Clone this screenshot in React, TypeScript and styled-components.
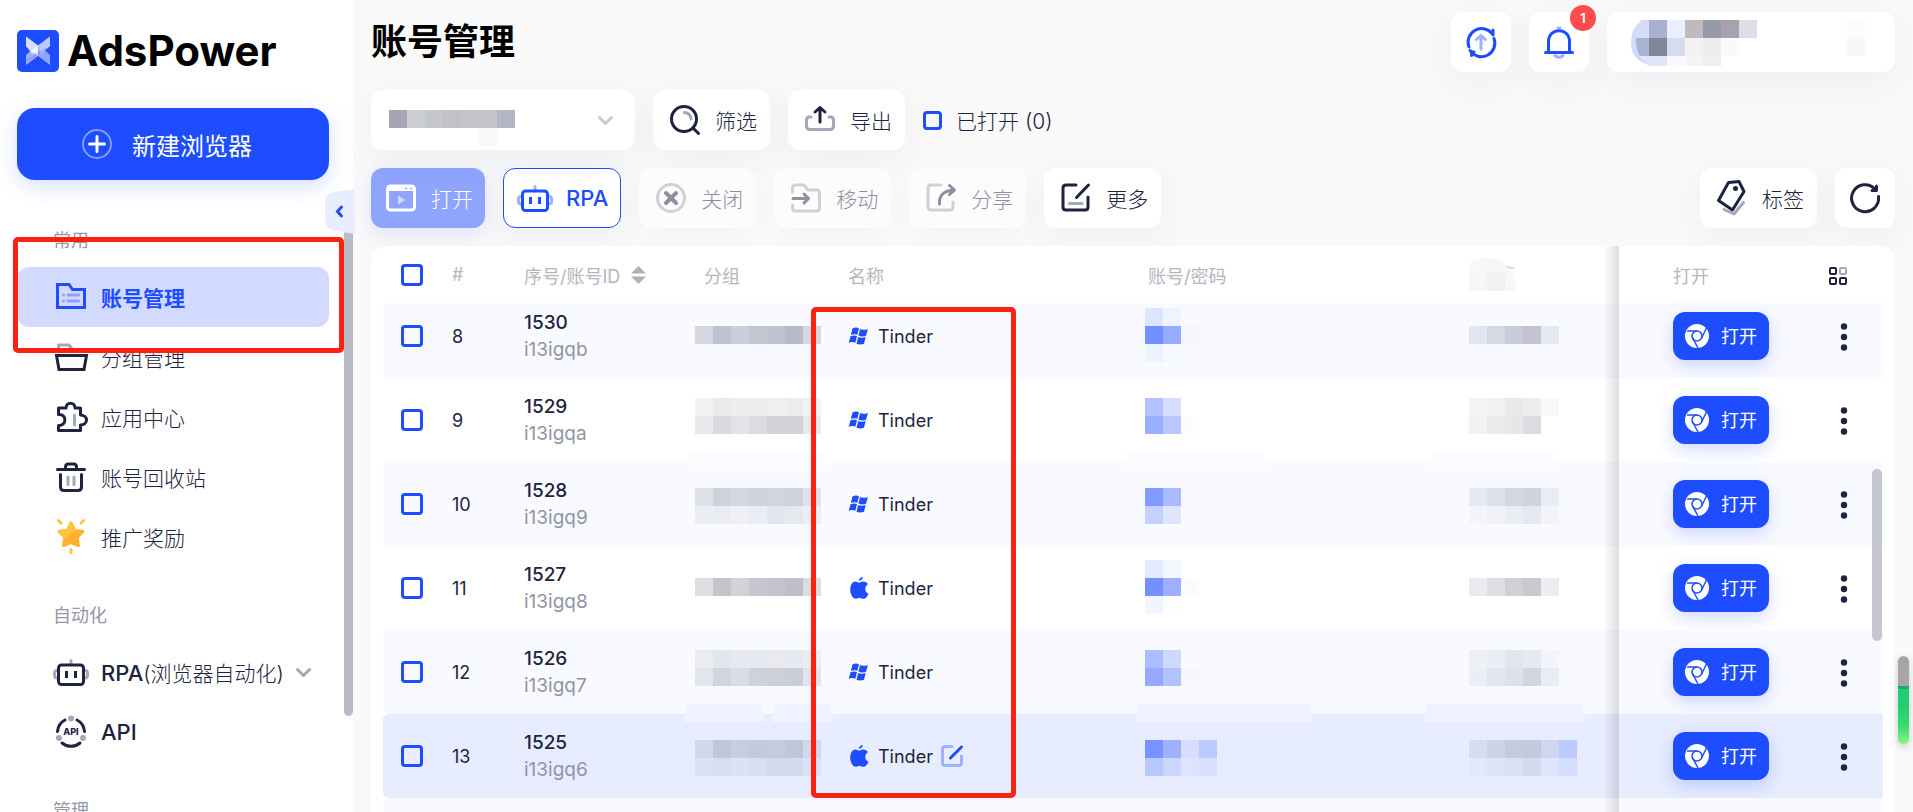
import React from 'react';
import styled, { createGlobalStyle, css } from 'styled-components';

const blue = '#1e4dff';
const blueSoft = '#9fb2ff';
const ink = '#1e2340';
const inkSoft = '#a5a8b8';

const GlobalStyle = createGlobalStyle`
  *, *::before, *::after { box-sizing: border-box; }
  body {
    margin: 0;
    background: #f9f9f9;
    color: ${ink};
    font-family: Inter, 'Noto Sans CJK SC', sans-serif;
    font-size: 18px;
    font-weight: 400;
  }
  button, input, select { font: inherit; color: inherit; margin: 0; }
  button { cursor: pointer; }
  svg { display: block; flex: none; overflow: visible; }
`;

/* ---------- page frame ---------- */

const Shell = styled.div`
  display: flex;
  height: 100vh;
  overflow: hidden;
  position: relative;
`;

const Sidebar = styled.aside`
  position: relative;
  flex: 0 0 353px;
  display: flex;
  flex-direction: column;
  padding: 30px 24px 0 17px;
  background: #fff;
`;

const Main = styled.main`
  flex: 1;
  min-width: 0;
  display: flex;
  flex-direction: column;
  gap: 18px;
  padding: 12px 18px 0;
`;

/* ---------- sidebar ---------- */

const Brand = styled.div`
  display: flex;
  align-items: center;
  gap: 8px;
  height: 42px;
  color: #000;
  font-size: 42px;
  font-weight: 700;
  line-height: 42px;
`;

const CreateButton = styled.button`
  display: flex;
  flex: none;
  align-items: center;
  justify-content: center;
  gap: 20px;
  height: 72px;
  margin-top: 36px;
  padding: 0 12px 0 0;
  border: 0;
  border-radius: 18px;
  background: ${blue};
  box-shadow: 0 6px 20px rgba(30, 77, 255, 0.18);
  color: #fff;
  font-size: 24px;
`;

const Nav = styled.nav`
  flex: 1;
  min-height: 0;
  overflow: hidden;
  padding-top: 12px;
`;

const NavLabel = styled.h2`
  margin: 37px 0 14px;
  padding-left: 36px;
  color: #9497a6;
  font-size: 18px;
  font-weight: 400;
  line-height: 24px;
`;

const NavLink = styled.a<{ $active?: boolean }>`
  display: flex;
  align-items: center;
  gap: 12px;
  height: 60px;
  padding-left: 36px;
  border-radius: 12px;
  color: ${ink};
  font-size: 21px;
  font-weight: 300;
  text-decoration: none;
  ${(p) =>
    p.$active &&
    css`
      background: #d2daff;
      color: ${blue};
      font-weight: 700;
    `}
`;

const Latin = styled.span`
  font-size: 22px;
  font-weight: 500;
`;

const SideThumb = styled.div`
  position: absolute;
  top: 230px;
  right: 0;
  width: 9px;
  height: 486px;
  border-radius: 5px;
  background: #b9bcc6;
`;

const CollapseButton = styled.button`
  position: absolute;
  z-index: 2;
  top: 189px;
  right: -2px;
  padding: 0;
  border: 0;
  background: none;
`;

/* ---------- top bars ---------- */

const Bar = styled.div`
  display: flex;
  flex: none;
  align-items: center;
  gap: 18px;
  height: 60px;
`;

const Title = styled.h1`
  flex: 1;
  margin: 0;
  color: #000;
  font-size: 36px;
  font-weight: 700;
  line-height: 60px;
`;

const Spacer = styled.div`
  flex: 1;
`;

const tile = css`
  display: flex;
  align-items: center;
  height: 60px;
  border: 0;
  border-radius: 12px;
  background: #fff;
  box-shadow: 0 10px 36px rgba(30, 50, 140, 0.05);
`;

const IconButton = styled.button`
  ${tile}
  position: relative;
  justify-content: center;
  width: 60px;
  padding: 0;
`;

const Badge = styled.span`
  position: absolute;
  top: -7px;
  right: -7px;
  width: 26px;
  height: 26px;
  border-radius: 50%;
  background: #ff4d4f;
  color: #fff;
  font-size: 13px;
  font-weight: 600;
  line-height: 26px;
  text-align: center;
`;

const ProfileButton = styled.button`
  ${tile}
  width: 288px;
  padding: 0 24px;
`;

const ToolButton = styled.button<{ $tone?: 'primary' | 'outline' }>`
  ${tile}
  gap: 15px;
  padding: 0 13px 0 17px;
  font-size: 21px;
  font-weight: 300;
  white-space: nowrap;
  &:disabled {
    background: #fcfcfc;
    box-shadow: 0 10px 36px rgba(30, 50, 140, 0.02);
    color: #8c90a0;
    cursor: default;
  }
  ${(p) =>
    p.$tone === 'primary' &&
    css`
      padding: 0 12px 0 15px;
      &:disabled {
        background: #8ea4fd;
        box-shadow: 0 6px 20px rgba(30, 77, 255, 0.12);
        color: #fff;
      }
    `}
  ${(p) =>
    p.$tone === 'outline' &&
    css`
      gap: 13px;
      padding: 0 12px 0 13px;
      border: 1px solid ${blue};
      color: ${blue};
    `}
`;

const SelectBox = styled.label`
  ${tile}
  position: relative;
  width: 264px;
  padding: 0 22px 0 18px;
  justify-content: space-between;
`;

const GroupSelect = styled.select`
  position: absolute;
  inset: 0;
  width: 100%;
  border: 0;
  border-radius: 12px;
  background: transparent;
  appearance: none;
`;

const CheckLabel = styled.label`
  display: flex;
  align-items: center;
  gap: 14px;
  font-size: 21px;
  font-weight: 300;
`;

const Check = styled.input.attrs({ type: 'checkbox' })<{ $small?: boolean }>`
  display: block;
  flex: none;
  width: ${(p) => (p.$small ? 19 : 22)}px;
  height: ${(p) => (p.$small ? 19 : 22)}px;
  border: 3px solid ${blue};
  border-radius: 4px;
  background: transparent;
  appearance: none;
`;

/* ---------- table ---------- */

const Card = styled.section`
  position: relative;
  flex: 1;
  min-height: 0;
  overflow: hidden;
  padding: 0 12px;
  border-radius: 15px 15px 0 0;
  background: #fff;
`;

const Table = styled.table`
  width: 100%;
  table-layout: fixed;
  border-collapse: separate;
  border-spacing: 0;
`;

const Col = styled.col<{ $w?: number }>`
  width: ${(p) => (p.$w ? `${p.$w}px` : 'auto')};
`;

const pinned = css`
  position: relative;
  padding-left: 54px;
  &::before {
    content: '';
    position: absolute;
    top: 0;
    bottom: 0;
    left: -16px;
    width: 16px;
    background: linear-gradient(to right, rgba(0, 0, 0, 0), rgba(0, 0, 0, 0.13));
  }
`;

const Th = styled.th<{ $pinned?: boolean; $end?: boolean }>`
  height: 57px;
  padding: 0 0 0 18px;
  color: #b4b6c0;
  font-weight: 400;
  text-align: left;
  ${(p) => p.$pinned && pinned}
  ${(p) =>
    p.$end &&
    css`
      padding: 0 36px 0 18px;
    `}
`;

const Row = styled.tr<{ $fill: string; $cut?: boolean }>`
  & > td {
    height: ${(p) => (p.$cut ? 75 : 84)}px;
    padding-bottom: ${(p) => (p.$cut ? 9 : 0)}px;
    background: ${(p) => p.$fill};
  }
  & > td:first-child {
    border-radius: ${(p) => (p.$cut ? '0 0 0 6px' : '6px 0 0 6px')};
  }
`;

const Td = styled.td<{ $pad?: number; $pinned?: boolean; $end?: boolean }>`
  padding: 0 0 0 ${(p) => p.$pad ?? 18}px;
  line-height: 27px;
  ${(p) => p.$pinned && pinned}
  ${(p) =>
    p.$end &&
    css`
      padding-right: 33px;
      text-align: right;
    `}
`;

const SortHead = styled.button`
  display: flex;
  align-items: center;
  gap: 11px;
  padding: 0;
  border: 0;
  background: none;
  white-space: nowrap;
`;

const Serial = styled.div`
  font-size: 19px;
  font-weight: 500;
`;

const ProfileId = styled.div`
  color: #9194a5;
  font-size: 19px;
`;

const NameLine = styled.div`
  display: flex;
  align-items: center;
  gap: 8px;
`;

const OpenButton = styled.button`
  display: flex;
  align-items: center;
  gap: 12px;
  width: 96px;
  height: 48px;
  padding: 0 12px;
  border: 0;
  border-radius: 12px;
  background: ${blue};
  box-shadow: 0 6px 18px rgba(30, 77, 255, 0.2);
  color: #fff;
  white-space: nowrap;
`;

const PlainButton = styled.button`
  display: inline-flex;
  padding: 0;
  border: 0;
  background: none;
  vertical-align: middle;
`;

const TableThumb = styled.div`
  position: absolute;
  top: 223px;
  right: 13px;
  width: 10px;
  height: 172px;
  border-radius: 5px;
  background: #c4c6d2;
`;

/* ---------- overlays ---------- */

const Mark = styled.div<{ $x: number; $y: number; $w: number; $h: number }>`
  position: absolute;
  z-index: 3;
  left: ${(p) => p.$x}px;
  top: ${(p) => p.$y}px;
  width: ${(p) => p.$w}px;
  height: ${(p) => p.$h}px;
  border: 5px solid #ff2012;
  border-radius: 5px;
  pointer-events: none;
`;

const Meter = styled.div`
  position: absolute;
  top: 656px;
  right: 4px;
  width: 11px;
  height: 88px;
  border-radius: 6px;
  background: linear-gradient(#a6a6a6 0 30px, #18b25e 30px 33px, #20cf73 33px 50px, #3bdb6e 70px, #86f77f 88px);
  box-shadow: 0 3px 8px rgba(0, 0, 0, 0.18);
`;

/* ---------- drawings ---------- */

type Kids = { w?: number; h?: number; color?: string; sw?: number; children: React.ReactNode };
const Draw = ({ w = 30, h = 30, color = ink, sw = 3, children }: Kids) => (
  <svg width={w} height={h} viewBox={`0 0 ${w} ${h}`} fill="none" stroke={color} strokeWidth={sw} strokeLinecap="round" strokeLinejoin="round" aria-hidden="true">
    {children}
  </svg>
);

const Logo = () => (
  <svg width="42" height="42" viewBox="0 0 42 42" aria-hidden="true">
    <rect width="42" height="42" rx="5" fill={blue} />
    <path d="M9 6.500 21 15.500V26L9 35V25L13.500 21 9 16Z" fill="#fff" opacity=".55" />
    <path d="M9 6.500 21 15.500V21L15 24 9 16Z" fill="#fff" opacity=".6" />
    <path d="M33 6.500 21 15.500V26L33 35V25L28 20.500 33 16Z" fill="#fff" opacity=".5" />
    <path d="M33 6.500 21 15.500 24 24 33 16Z" fill="#fff" opacity=".4" />
    <path d="M21 15.500V26L14 21Z" fill="#fff" opacity=".7" />
    <path d="M10 31 30 18" stroke={blue} strokeWidth="1" opacity=".35" />
  </svg>
);

const FolderIcon = () => (
  <Draw w={36} h={36} color={blue}>
    <path strokeLinejoin="miter" d="M4.500 5.500H16L19.500 10.500H31.500V28.500H4.500Z" />
    <path stroke="#8ba2ff" d="M10.500 16h0M15 16H25.500M10.500 22h0M15 22H25.500" />
  </Draw>
);
const GroupIcon = () => (
  <Draw w={36} h={36}>
    <path stroke={inkSoft} d="M5.500 13V6H16L19 10" />
    <path strokeLinejoin="miter" d="M3.500 16.500H33.500L31 30.500H6Z" />
  </Draw>
);
const PuzzleIcon = () => (
  <Draw w={36} h={36}>
    <path d="M5.500 9H13C13 2.500 22 2.500 22 9H27.500V16C35.500 16.500 35.500 25.500 27.500 26V31.500H5.500V26.500C14 27 14 14.500 5.500 15.500Z" />
    <path stroke={inkSoft} d="M21.500 16V26" />
  </Draw>
);
const TrashIcon = () => (
  <Draw w={36} h={36}>
    <path d="M4.500 10.500H31.500M12.500 9.500V8Q12.500 5 15.500 5H20.500Q23.500 5 23.500 8V9.500M7.500 15.500V28Q7.500 31.500 11 31.500H25Q28.500 31.500 28.500 28V15.500" />
    <path stroke={inkSoft} d="M15 18V25.500M21 18V25.500" />
  </Draw>
);
const StarIcon = () => (
  <Draw w={36} h={36} color="#ffc43d">
    <path fill="#ffb02e" stroke="#ffb02e" d="M18 4 21.600 11.400 30 12.500 24.200 18.300 25.500 26.500 18 23.500 10.500 26.500 11.800 18.300 6 12.500 14.400 11.400Z" />
    <path fill="#ffc43d" d="M18 4 21 10.500 12 18 6 12.500 14.400 11.400Z" />
    <path d="M5.500 1.500 8 4M30.500 1.500 28 4M18 30.500V33.500" />
  </Draw>
);
const RobotIcon = ({ color = ink, soft = inkSoft }: { color?: string; soft?: string }) => (
  <Draw w={36} h={27} color={color}>
    <path stroke={soft} d="M18 1.500V4M4 11.500Q1.500 11.500 1.500 14V16.500Q1.500 19 4 19M32 11.500Q34.500 11.500 34.500 14V16.500Q34.500 19 32 19" />
    <rect x="5.500" y="6" width="25" height="19.500" rx="3" />
    <path strokeLinecap="butt" d="M13.500 12V19M22.500 12V19" />
  </Draw>
);
const ApiIcon = () => (
  <Draw w={36} h={36}>
    <path d="M12 6A14 14 0 0 0 4.500 17.500M24 6A14 14 0 0 1 31.500 17.500M9 29A14 14 0 0 0 27 29" />
    <g fill={inkSoft} stroke="none">
      <circle cx="18" cy="4.500" r="3" />
      <circle cx="6" cy="24" r="3" />
      <circle cx="30" cy="24" r="3" />
    </g>
    <text x="18" y="21" fill={ink} stroke="none" fontSize="9" fontWeight="800" textAnchor="middle">API</text>
  </Draw>
);
const Chevron = ({ color = inkSoft }: { color?: string }) => (
  <Draw w={15} h={9} color={color}>
    <path d="M1.500 1.500 7.500 7.500 13.500 1.500" />
  </Draw>
);
const PlusIcon = () => (
  <Draw color="#fff">
    <circle cx="15" cy="15" r="14" strokeWidth="2" opacity=".45" />
    <path d="M15 7.500V22.500M7.500 15H22.500" />
  </Draw>
);
const SyncIcon = () => (
  <Draw color={blue}>
    <path d="M26 6.500A13.500 13.500 0 0 0 3 20M27 3V8M4 23.500A13.500 13.500 0 0 0 28 11.500M5.500 24.500V28.500M5 25H8" />
    <path stroke={blueSoft} d="M15 22V8.500M10.500 12.500 15 8.500 19.500 12.500" />
  </Draw>
);
const BellIcon = () => (
  <Draw h={33} color={blue}>
    <path stroke={blueSoft} d="M14 2H16M11 29.500Q15 33 19 29.500" />
    <path d="M1.500 26.500H28.500M4.500 25.500V15.500C4.500 1 25.500 1 25.500 15.500V25.500" />
  </Draw>
);
const SearchIcon = () => (
  <Draw>
    <circle cx="14" cy="14" r="12.500" />
    <path d="M23.500 23.500 28.500 28.500" />
    <path stroke={inkSoft} d="M14.500 7.500Q20.500 8 21 14" />
  </Draw>
);
const ExportIcon = () => (
  <Draw>
    <path stroke={inkSoft} d="M6 12H4.500Q1.500 12 1.500 15V21Q1.500 24.500 5 24.500H25Q28.500 24.500 28.500 21V15Q28.500 12 25.500 12H24" />
    <path d="M15 17V3M10 7 15 2.500 20 7" />
  </Draw>
);
const WindowIcon = () => (
  <Draw color="#fff">
    <rect x="1.500" y="3" width="27" height="24" rx="3" />
    <path stroke="none" fill="#fff" d="M2 3H28V8H2Z" />
    <path stroke="#8ea4fd" strokeWidth="2" d="M20 5.500h0M25 5.500h0" />
    <path stroke="none" fill="#fff" opacity=".55" d="M12 12.500 19.500 17 12 21.500Z" />
  </Draw>
);
const CloseIcon = () => (
  <Draw color="#8c90a0">
    <circle cx="15" cy="15" r="13.500" stroke="#d0d1d8" />
    <path strokeWidth="4" d="M10 10 20 20M20 10 10 20" />
  </Draw>
);
const MoveIcon = () => (
  <Draw color="#8c90a0">
    <path stroke="#d0d1d8" d="M1.500 9V5Q1.500 2 4.500 2H13L17 7H25.500Q28.500 7 28.500 10V25Q28.500 28 25.500 28H4.500Q1.500 28 1.500 25V22" />
    <path d="M2 15.500H17M13 11 17.500 15.500 13 20" />
  </Draw>
);
const ShareIcon = () => (
  <Draw color="#8c90a0">
    <path stroke="#d0d1d8" d="M15 2H5Q2 2 2 5V24Q2 27 5 27H24Q27 27 27 24V19" />
    <path d="M13.500 21Q12.500 8 28 7M23.500 2.500 28.500 7 23.500 11.500" />
  </Draw>
);
const MoreIcon = () => (
  <Draw>
    <path d="M15 2H5Q2 2 2 5V24Q2 27 5 27H24Q27 27 27 24V14M15.500 14.500 27.500 2" />
    <path stroke={inkSoft} d="M8.500 20.500H21" />
  </Draw>
);
const TagIcon = () => (
  <Draw w={30} h={36}>
    <path stroke={inkSoft} d="M7 29.500 17 34 26.500 22.500" />
    <path d="M11.500 2.500 22 1.500 27 11.500 15.500 30 1.500 20.500Z" />
    <circle cx="18.500" cy="8.500" r="2.500" fill={ink} stroke="none" />
  </Draw>
);
const RefreshIcon = () => (
  <Draw>
    <path d="M28.500 13.500A13.500 13.500 0 1 1 25 6M26.500 3V7.500H22" />
  </Draw>
);
const SortIcon = () => (
  <svg width="15" height="18" viewBox="0 0 15 18" fill="#b0b1b5" aria-hidden="true">
    <path d="M7.500 0 15 7.500H0ZM0 10.500H15L7.500 18Z" />
  </svg>
);
const GridIcon = () => (
  <Draw w={18} h={18} sw={2}>
    <rect x="1" y="1" width="6" height="6" rx="1" />
    <rect x="11" y="1" width="6" height="6" rx="1" stroke={inkSoft} />
    <rect x="1" y="11" width="6" height="6" rx="1" />
    <rect x="11" y="11" width="6" height="6" rx="1" />
  </Draw>
);
const WindowsIcon = () => (
  <svg width="22" height="21" viewBox="0 0 22 21" fill={blue} aria-hidden="true">
    <path d="M4.500 2.500Q7.500.8 11 2.200L9.300 8.800Q6.300 7.500 2.800 9ZM12.200 3Q15.500 4.600 20 2.900L18 9.700Q14 11.200 10.400 9.500ZM2.500 10.300Q6 8.800 9 10.200L7.300 16.800Q4 15.200.7 16.900ZM10.200 11Q13.700 12.500 17.700 11L16 17.700Q12 19.300 8.500 17.700Z" />
  </svg>
);
const AppleIcon = () => (
  <svg width="22" height="24" viewBox="0 0 22 24" fill={blue} aria-hidden="true">
    <path d="M11.200 6.800Q13.500 5.500 15.500 5.500 18.500 5.700 20 8 17 10 17.200 13 17.500 16.500 20.500 17.700 18.500 22.700 15.500 22.700 13.500 22.700 11.200 21.700 9 22.700 7.500 22.700 4.500 22.500 2.800 17.500 1.200 12 3.500 8 5.500 5 8.500 5.700ZM10.800 5Q10.800 2 14.800.8 14.800 4 10.800 5Z" />
  </svg>
);
const EditIcon = () => (
  <Draw w={22} h={22} color={blueSoft} sw={3}>
    <path d="M11 1.500H4.500Q1.500 1.500 1.500 4.500V17.500Q1.500 20.500 4.500 20.500H17.500Q20.500 20.500 20.500 17.500V11" />
    <path stroke={blue} d="M9.500 13 20.500 2" />
  </Draw>
);
const ChromeIcon = () => (
  <svg width="24" height="24" viewBox="0 0 24 24" fill="none" stroke={blue} strokeWidth="1.500" aria-hidden="true">
    <circle cx="12" cy="12" r="12" fill="#fff" stroke="none" />
    <circle cx="12" cy="12" r="5" />
    <path d="M2 7H12M21.500 4 16.600 14M7.300 13.500 13 24" />
  </svg>
);
const DotsIcon = () => (
  <svg width="12" height="28" viewBox="0 0 12 28" fill={ink} aria-hidden="true">
    <circle cx="6" cy="3.500" r="3.200" />
    <circle cx="6" cy="14" r="3.200" />
    <circle cx="6" cy="24.500" r="3.200" />
  </svg>
);
const CollapseIcon = () => (
  <svg width="30" height="45" viewBox="0 0 30 45" aria-hidden="true">
    <path d="M30 0V45L9 41.500Q0 40 0 31V13Q0 4 9 3Z" fill="#e8edff" />
    <path d="M16.500 18 12.500 22.500 16.500 27" fill="none" stroke={blue} strokeWidth="3" strokeLinecap="round" />
  </svg>
);

/* Censored values: rows of 18px blocks around the middle line of a table row. */
const CELL = 18;
type Strip = { x: number; w: number; fill: string };
type MosaicData = { top: number; lines: string[][]; strips?: Strip[] };
const Mosaic = ({ top, lines, strips = [] }: MosaicData) => (
  <svg width="126" height="66" viewBox="0 -33 126 66" shapeRendering="crispEdges" aria-hidden="true">
    {strips.map((s) => (
      <path key={s.x} d={`M${s.x + 3} -52H${s.x + s.w - 4}L${s.x + s.w} -34H${s.x}Z`} fill={s.fill} />
    ))}
    {lines.map((line, r) =>
      line.map((fill, c) => (
        <rect key={`${r}-${c}`} x={c * CELL} y={top + r * CELL} width={CELL} height={CELL} fill={fill} />
      )),
    )}
  </svg>
);

const profileBlocks = [
  ['#d5dcfa', '#a8b1d4', '#ebeffd', '#c1b9be', '#969ba8', '#a8a2ae', '#dcdfe8'],
  ['#aab2d0', '#81869a', '#d5dbf0', '#f2f2f3', '#eeeef1', '#f8fafc'],
  ['#dfe5fb', '#e0e6fb', '#f8faff', '#f5f5f5', '#efeff1'],
];
const ProfileMosaic = () => (
  <svg width="240" height="60" viewBox="0 0 240 60" aria-hidden="true">
    <clipPath id="profile-clip">
      <path d="M11 8H240V54H22Q5 48 5 28 5 15 11 8Z" />
    </clipPath>
    <path d="M11 8Q0 16 0 30 0 50 22 54H34V8Z" fill="#d0d9ff" />
    <g clipPath="url(#profile-clip)" shapeRendering="crispEdges">
      {profileBlocks.map((line, r) =>
        line.map((fill, c) => (
          <rect key={`${r}-${c}`} x={c * CELL} y={8 + r * CELL} width={CELL} height={r === 2 ? 11 : CELL} fill={fill} />
        )),
      )}
      <rect x="216" y="26" width="18" height="18" fill="#f7f7f7" />
      <rect x="216" y="8" width="18" height="18" fill="#fcfcfc" />
    </g>
  </svg>
);

const selectBlocks = ['#a8a5b3', '#cccfd4', '#c6c7cc', '#c1c1c8', '#c4c4cb', '#c4c4cb', '#b3b6c3'];
const SelectMosaic = () => (
  <svg width="126" height="20" viewBox="0 0 126 20" shapeRendering="crispEdges" aria-hidden="true">
    {selectBlocks.map((fill, c) => (
      <rect key={c} x={c * CELL} width={CELL} height={CELL} fill={fill} />
    ))}
    <rect x="90" y="18" width="18" height="18" fill="#f8f8f9" />
  </svg>
);

const HeadMosaic = () => (
  <svg width="54" height="33" viewBox="0 0 54 33" aria-hidden="true">
    <path d="M0 6Q8 0 18 0V15H0Z" fill="#f8f8f8" />
    <path d="M18 0Q34 0 44 15H18Z" fill="#f6f6f7" />
    <path d="M0 15H18V33H0Z" fill="#f6f6f7" />
    <path d="M18 15H36V33H18Z" fill="#f1f1f3" />
    <path d="M36 15H44Q48 23 47 33H36Z" fill="#f8f8f9" />
    <path d="M38 8 41 10H45" stroke="#b4b6c0" fill="none" />
  </svg>
);

/* ---------- data ---------- */

type Item = { n: number; serial: string; id: string; os: 'win' | 'mac'; fill: string; group: MosaicData; account: MosaicData; tag: MosaicData; editing?: boolean };

const pale = '#f9faff';
const items: Item[] = [
  {
    n: 8, serial: '1530', id: 'i13igqb', os: 'win', fill: pale,
    group: { top: -10, lines: [['#d5d8e2', '#c0c2cf', '#cccedb', '#c3c5d1', '#c0c2cf', '#b8bac9', '#d5d8e3']] },
    account: { top: -28, lines: [['#dee5ff', '#eff3ff'], ['#7390ff', '#98acff', '#f5f6fc'], ['#edf2ff', '#f5f8ff']] },
    tag: { top: -10, lines: [['#e3e6f0', '#d6d8e3', '#c9cbd8', '#c3c4d0', '#e5e8f0']] },
  },
  {
    n: 9, serial: '1529', id: 'i13igqa', os: 'win', fill: '#fff',
    group: { top: -22, lines: [['#f2f2f2', '#eaeaec', '#eeeeef', '#eceded', '#f0f0f1', '#ececed', '#f2f2f3'], ['#e9e9eb', '#d9dadf', '#e2e3e6', '#dbdce0', '#d2d3d8', '#d2d3d8', '#e9e9eb']] },
    account: { top: -22, lines: [['#b3c1ff', '#d6deff'], ['#9aaeff', '#bac7ff', '#fcfcfd']] },
    tag: { top: -22, lines: [['#f4f4f5', '#f1f1f3', '#e9e9eb', '#ededef', '#f8f8f8'], ['#f2f2f3', '#ebebed', '#e7e7ea', '#dbdce0']] },
  },
  {
    n: 10, serial: '1528', id: 'i13igq9', os: 'win', fill: pale,
    group: {
      top: -16, lines: [['#e0e2e9', '#cfd1dc', '#d4d7e2', '#d0d3dd', '#d3d6df', '#cfd1dc', '#e0e3ea'], ['#ebeef7', '#ebecf2', '#eff0f6', '#e8edf8', '#e2e6ef', '#e6e8f0', '#eceef4']],
      strips: [{ x: -7, w: 142, fill: '#fbfcff' }],
    },
    account: { top: -16, lines: [['#809aff', '#a9baff', '#f7f8fc'], ['#c4d1ff', '#dee5ff']], strips: [{ x: -21, w: 143, fill: '#fbfcff' }] },
    tag: { top: -16, lines: [['#e5e9f2', '#dee1ea', '#d4d7e1', '#d1d4de', '#e9ecf4'], ['#f3f5fb', '#f0f2f8', '#ebedf4', '#e5e8f0', '#f2f4fa']], strips: [{ x: -39, w: 126, fill: '#fbfcff' }] },
  },
  {
    n: 11, serial: '1527', id: 'i13igq8', os: 'mac', fill: '#fff',
    group: { top: -10, lines: [['#dedfe3', '#c4c4ce', '#d2d3d9', '#c6c6d0', '#c3c4ce', '#bebfc9', '#dcdde2']] },
    account: { top: -28, lines: [['#e3e9ff', '#f4f7ff'], ['#7390ff', '#9cb0ff', '#fbfbfc'], ['#f2f5ff', '#fcfdff']] },
    tag: { top: -10, lines: [['#eaebee', '#dedfe3', '#cfd0d5', '#c9cad0', '#ededf0']] },
  },
  {
    n: 12, serial: '1526', id: 'i13igq7', os: 'win', fill: pale,
    group: { top: -22, lines: [['#ebecf0', '#e2e6ee', '#e7e9ef', '#e5e9f1', '#e8eaef', '#e6e9ef', '#ebedf1'], ['#e4e6ed', '#d2d4de', '#dadde7', '#cfd1db', '#cdcfd9', '#cbcdd8', '#e1e4ec']] },
    account: { top: -22, lines: [['#adbdff', '#cdd9ff'], ['#94a9ff', '#b2c2ff', '#f6f7fb']] },
    tag: { top: -22, lines: [['#eef0f5', '#eaedf3', '#e1e5ee', '#e6e9f1', '#f3f5fb'], ['#eaeef7', '#e3e7f0', '#dee1eb', '#d3d6e0', '#e9ecf4']] },
  },
  {
    n: 13, serial: '1525', id: 'i13igq6', os: 'mac', fill: '#e7ecff', editing: true,
    group: {
      top: -16, lines: [['#d2d7ea', '#c1c6dc', '#c8cde2', '#c4c9df', '#c5cae0', '#c0c5da', '#d2d7ec'], ['#dce1f4', '#d8ddf2', '#dce2f6', '#d9def2', '#d3d8ec', '#d5daee', '#dce1f5']],
      strips: [{ x: -11, w: 81, fill: '#eff3ff' }, { x: 77, w: 62, fill: '#eff3ff' }],
    },
    account: { top: -16, lines: [['#7893ff', '#9db1ff', '#d6deff', '#bdcaff'], ['#b9c7ff', '#cbd6ff', '#dfe4fe', '#d8e1ff']], strips: [{ x: -10, w: 178, fill: '#eff3ff' }] },
    tag: { top: -16, lines: [['#d7dcf0', '#ced3e8', '#c5cadf', '#c5c9de', '#cfd6f2', '#bbc9ff'], ['#e3e9fc', '#dee3f7', '#dbe0f3', '#d5daee', '#dee4fa', '#d6deff']], strips: [{ x: -45, w: 162, fill: '#eff3ff' }] },
  },
];

const widths = [51, 72, 180, 144, 300, undefined, 168, 192, 72];

const ProfileTable = () => (
  <Table>
    <colgroup>
      {widths.map((w, i) => (
        <Col key={i} $w={w} />
      ))}
    </colgroup>
    <thead>
      <tr>
        <Th><Check aria-label="全选" /></Th>
        <Th>#</Th>
        <Th><SortHead>序号/账号ID<SortIcon /></SortHead></Th>
        <Th>分组</Th>
        <Th>名称</Th>
        <Th>账号/密码</Th>
        <Th><HeadMosaic /></Th>
        <Th $pinned>打开</Th>
        <Th $end><PlainButton aria-label="列设置"><GridIcon /></PlainButton></Th>
      </tr>
    </thead>
    <tbody>
      {items.map((it, i) => (
        <Row key={it.n} $fill={it.fill} $cut={i === 0}>
          <Td><Check aria-label={it.serial} /></Td>
          <Td>{it.n}</Td>
          <Td>
            <Serial>{it.serial}</Serial>
            <ProfileId>{it.id}</ProfileId>
          </Td>
          <Td $pad={9}><Mosaic {...it.group} /></Td>
          <Td>
            <NameLine>
              {it.os === 'win' ? <WindowsIcon /> : <AppleIcon />}
              <span>Tinder</span>
              {it.editing && <PlainButton aria-label="编辑"><EditIcon /></PlainButton>}
            </NameLine>
          </Td>
          <Td $pad={15}><Mosaic {...it.account} /></Td>
          <Td><Mosaic {...it.tag} /></Td>
          <Td $pinned><OpenButton><ChromeIcon />打开</OpenButton></Td>
          <Td $end><PlainButton aria-label="更多操作"><DotsIcon /></PlainButton></Td>
        </Row>
      ))}
      <Row $fill={pale}>
        {widths.map((_, i) => (
          <Td key={i} $pinned={i === 7} />
        ))}
      </Row>
    </tbody>
  </Table>
);

export default function App() {
  return (
    <Shell>
      <GlobalStyle />
      <Sidebar>
        <Brand><Logo />AdsPower</Brand>
        <CreateButton><PlusIcon />新建浏览器</CreateButton>
        <Nav>
          <NavLabel>常用</NavLabel>
          <NavLink href="#accounts" $active><FolderIcon />账号管理</NavLink>
          <NavLink href="#groups"><GroupIcon />分组管理</NavLink>
          <NavLink href="#apps"><PuzzleIcon />应用中心</NavLink>
          <NavLink href="#trash"><TrashIcon />账号回收站</NavLink>
          <NavLink href="#rewards"><StarIcon />推广奖励</NavLink>
          <NavLabel>自动化</NavLabel>
          <NavLink href="#rpa"><RobotIcon /><span><Latin>RPA</Latin>(浏览器自动化)</span><Chevron /></NavLink>
          <NavLink href="#api"><ApiIcon /><Latin>API</Latin></NavLink>
          <NavLabel>管理</NavLabel>
        </Nav>
        <SideThumb />
        <CollapseButton aria-label="收起"><CollapseIcon /></CollapseButton>
        <Mark $x={13} $y={237} $w={331} $h={116} />
      </Sidebar>
      <Main>
        <Bar>
          <Title>账号管理</Title>
          <IconButton aria-label="同步"><SyncIcon /></IconButton>
          <IconButton aria-label="通知"><BellIcon /><Badge>1</Badge></IconButton>
          <ProfileButton aria-label="用户"><ProfileMosaic /></ProfileButton>
        </Bar>
        <Bar>
          <SelectBox>
            <SelectMosaic />
            <Chevron color="#c9cad2" />
            <GroupSelect aria-label="分组" />
          </SelectBox>
          <ToolButton><SearchIcon />筛选</ToolButton>
          <ToolButton><ExportIcon />导出</ToolButton>
          <CheckLabel><Check $small />已打开 (0)</CheckLabel>
        </Bar>
        <Bar>
          <ToolButton $tone="primary" disabled><WindowIcon />打开</ToolButton>
          <ToolButton $tone="outline"><RobotIcon color={blue} soft={blueSoft} /><Latin>RPA</Latin></ToolButton>
          <ToolButton disabled><CloseIcon />关闭</ToolButton>
          <ToolButton disabled><MoveIcon />移动</ToolButton>
          <ToolButton disabled><ShareIcon />分享</ToolButton>
          <ToolButton><MoreIcon />更多</ToolButton>
          <Spacer />
          <ToolButton><TagIcon />标签</ToolButton>
          <IconButton aria-label="刷新"><RefreshIcon /></IconButton>
        </Bar>
        <Card>
          <ProfileTable />
          <TableThumb />
          <Mark $x={440} $y={61} $w={205} $h={491} />
        </Card>
      </Main>
      <Meter />
    </Shell>
  );
}
